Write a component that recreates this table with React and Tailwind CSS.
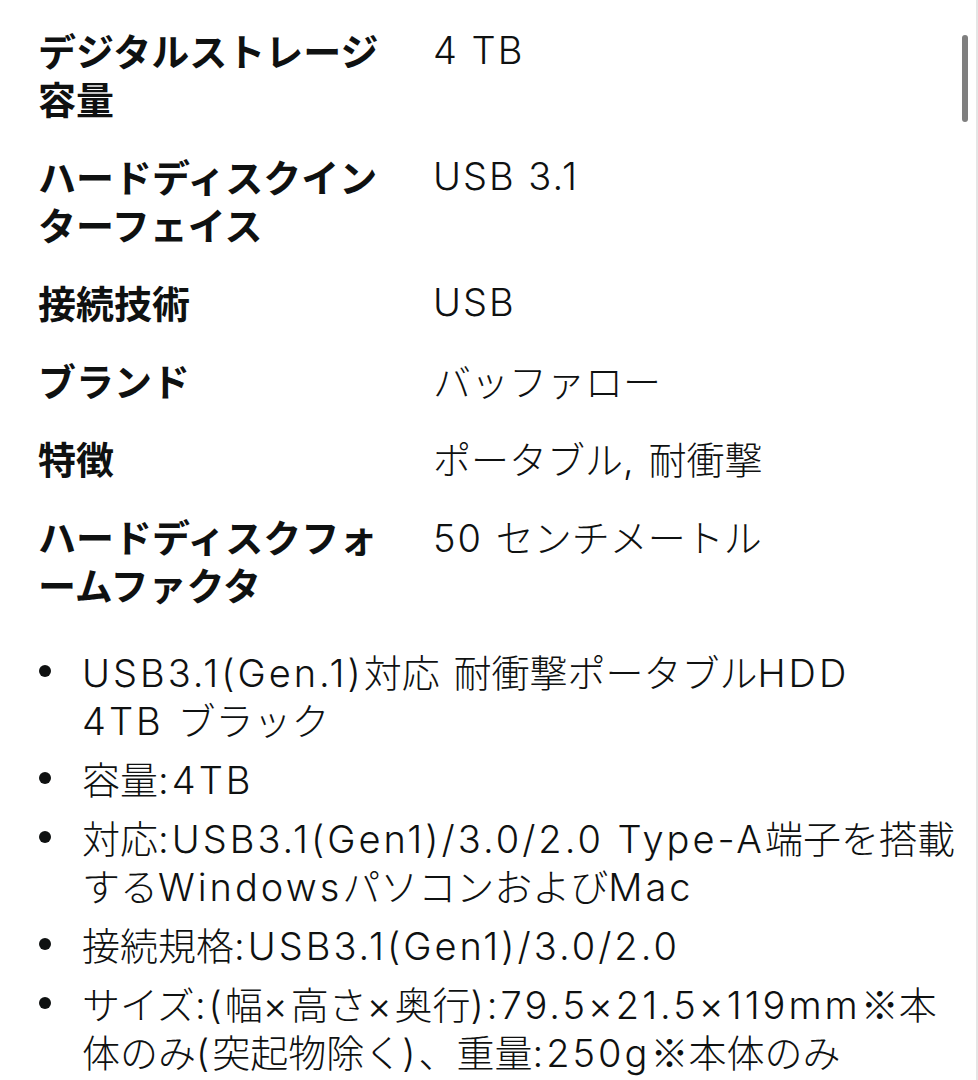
import React from "react";

const specs = [
  { label: "デジタルストレージ容量", value: "4 TB" },
  { label: "ハードディスクインターフェイス", value: "USB 3.1" },
  { label: "接続技術", value: "USB" },
  { label: "ブランド", value: "バッファロー" },
  { label: "特徴", value: "ポータブル, 耐衝撃" },
  { label: "ハードディスクフォームファクタ", value: "50 センチメートル" },
];

// line breaks kept as in the screenshot
const bullets = [
  ["USB3.1(Gen.1)対応 耐衝撃ポータブルHDD", "4TB ブラック"],
  ["容量:4TB"],
  ["対応:USB3.1(Gen1)/3.0/2.0 Type-A端子を搭載", "するWindowsパソコンおよびMac"],
  ["接続規格:USB3.1(Gen1)/3.0/2.0"],
  ["サイズ:(幅×高さ×奥行):79.5×21.5×119mm※本", "体のみ(突起物除く)、重量:250g※本体のみ"],
];

const jp = { fontFamily: '"Noto Sans CJK JP", sans-serif' };
const latin = { fontFamily: '"Inter", "Noto Sans CJK JP", sans-serif' };

// latin runs in the screenshot are set wider than Inter, so space them out
function Mixed({ text, track }) {
  const parts = text.split(/([\u3000-\u30ff\u4e00-\u9fff\uff00-\uffef※]+)/);
  return parts.map((p, i) =>
    /[\u3000-\u30ff\u4e00-\u9fff\uff00-\uffef※]/.test(p) ? (
      <span key={i} style={jp}>{p}</span>
    ) : (
      <span key={i} className={track}>{p}</span>
    )
  );
}

export default function App() {
  return (
    <div
      className="relative w-[978px] h-[1080px] overflow-hidden bg-white text-[#0f1111]"
      style={jp}
    >
      {/* scrollbar */}
      <div className="absolute right-[10px] top-[35px] w-[6px] h-[87px] rounded-full bg-[#7f7f7f]" />
      <div className="absolute right-0 top-0 w-[2px] h-full bg-[#e5e5e5]" />

      <div className="pl-[38px] pt-[11px]">
        <div className="grid grid-cols-[360px_1fr] gap-x-[35px] text-[38px] leading-[48px]">
          {specs.map((s) => (
            <React.Fragment key={s.label}>
              <div className="py-[15px] font-bold">{s.label}</div>
              <div className="py-[15px] font-light" style={latin}>
                <div className="h-[48px] whitespace-nowrap">
                  <Mixed text={s.value} track="tracking-[2px]" />
                </div>
              </div>
            </React.Fragment>
          ))}
        </div>

        <ul className="mt-[24px] flex flex-col gap-[11px] text-[38px] leading-[48px]">
          {bullets.map((lines, i) => (
            <li key={i} className="flex">
              <div className="w-[44px] shrink-0 h-[48px] flex items-center">
                <div className="size-[12px] rounded-full bg-[#0f1111] ml-[1px]" />
              </div>
              <div className="font-light" style={latin}>
                {lines.map((l, j) => (
                  <div key={j} className="h-[48px] whitespace-nowrap">
                    <Mixed text={l} track="tracking-[3px]" />
                  </div>
                ))}
              </div>
            </li>
          ))}
        </ul>
      </div>
    </div>
  );
}
